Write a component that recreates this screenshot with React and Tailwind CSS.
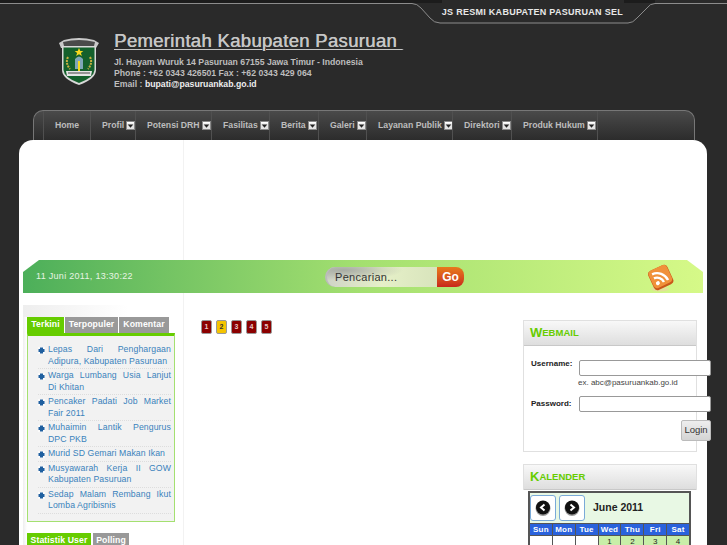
const navItems = [
  { label: "Home", width: "w-[47px]", arrow: false },
  { label: "Profil", width: "w-[45px]" },
  { label: "Potensi DRH", width: "w-[76px]" },
  { label: "Fasilitas", width: "w-[58px]" },
  { label: "Berita", width: "w-[49px]" },
  { label: "Galeri", width: "w-[48px]" },
  { label: "Layanan Publik", width: "w-[86px]" },
  { label: "Direktori", width: "w-[59px]" },
  { label: "Produk Hukum", width: "w-[87px]" },
];

const news = [
  { title: "Lepas Dari Penghargaan Adipura, Kabupaten Pasuruan" },
  { title: "Warga Lumbang Usia Lanjut Di Khitan" },
  { title: "Pencaker Padati Job Market Fair 2011" },
  { title: "Muhaimin Lantik Pengurus DPC PKB" },
  { title: "Murid SD Gemari Makan Ikan" },
  { title: "Musyawarah Kerja II GOW Kabupaten Pasuruan" },
  { title: "Sedap Malam Rembang Ikut Lomba Agribisnis" },
];

const days = ["Sun", "Mon", "Tue", "Wed", "Thu", "Fri", "Sat"];
const firstWeek = ["", "", "", "1", "2", "3", "4"];

const NavArrow = () => (
  <svg width="9" height="9" viewBox="0 0 9 9" className="ml-[2px] shrink-0">
    <rect x="0.5" y="0.5" width="8" height="8" fill="#e4e4e4" stroke="#8a8a8a" />
    <rect x="1" y="1" width="7" height="1.500" fill="#fff" />
    <path d="M1.800 3.500h5.400L4.500 6.800z" fill="#222" />
  </svg>
);

const Crest = () => (
  <svg width="42" height="49" viewBox="0 0 42 49">
    <path d="M1 6 L6 3 Q21 -1 36 3 L41 6 L38 11 L37 11 L4 11 L3 11 Z" fill="#c9c9c9" />
    <path d="M5 5 Q21 1 37 5 L36 9 L6 9 Z" fill="#4a4a4a" />
    <path d="M4 9 H38 V33 Q38 42 21 48 Q4 42 4 33 Z" fill="#d8d8d8" />
    <path d="M5.500 10.500 H36.500 V33 Q36 40.500 21 46 Q6 40.500 5.500 33 Z" fill="#14602c" />
    <path d="M21 11l1.300 3h3l-2.400 2 1 3-2.900-1.800L18.100 19l1-3-2.400-2h3z" fill="#f4d820" />
    <path d="M17 22 Q21 17 25 22 V32 H17 Z" fill="#7fa6b8" />
    <path d="M10 20 Q7 26 12 32 M32 20 Q35 26 30 32" stroke="#c9b040" strokeWidth="2" fill="none" strokeDasharray="2 1" />
    <rect x="20" y="24" width="2" height="11" fill="#f4d820" />
    <path d="M8 34 L34 34 L33 39 L9 39 Z" fill="#e4e4e4" />
    <path d="M10 36h22" stroke="#444" strokeWidth="1" />
  </svg>
);

const RssIcon = () => (
  <svg width="27" height="28" viewBox="0 0 27 28">
    <ellipse cx="13" cy="25" rx="9" ry="2.500" fill="#e8d8a0" opacity="0.7" />
    <g transform="rotate(-25 13.500 13)">
      <rect x="3" y="3" width="21" height="21" rx="4" fill="#c9571a" />
      <rect x="3.500" y="3" width="20" height="19" rx="4" fill="#f0913a" />
      <circle cx="8.500" cy="17.500" r="2" fill="#fff" />
      <path d="M7 11.500a7.500 7.500 0 0 1 7.500 7.500M7 7a12 12 0 0 1 12 12" stroke="#fff" strokeWidth="2.400" fill="none" />
    </g>
  </svg>
);

const NavCircle = ({ dir }) => (
  <button className="flex h-[26px] w-[26px] items-center justify-center rounded-[3px] border border-[#7aaad8] bg-white">
    <svg width="16" height="16" viewBox="0 0 16 16">
      <circle cx="8" cy="8.500" r="7.500" fill="#999" />
      <circle cx="8" cy="7.500" r="7" fill="#111" />
      <path d={dir === "left" ? "M9.500 4.500 6 7.500l3.500 3" : "M6.500 4.500 10 7.500l-3.500 3"} stroke="#fff" strokeWidth="2" fill="none" />
    </svg>
  </button>
);

const PanelTitle = ({ first, rest }) => (
  <div className="flex h-[25px] items-center border-b border-[#c8c8c8] bg-gradient-to-b from-[#f8f8f8] to-[#dedede] pb-[1px] pl-[6px] font-bold leading-none text-[#66cc00]">
    <span className="text-[13px]">{first}</span>
    <span className="text-[9.500px]">{rest}</span>
  </div>
);

const App = () => {
  return (
    <div className="relative h-[545px] w-[727px] overflow-hidden bg-[#2a2a2a] font-['Liberation_Sans',Arial,sans-serif]">
      {/* top strip with the notch for the tagline */}
      <svg width="727" height="30" viewBox="0 0 727 30" className="absolute left-0 top-0">
        <rect x="0" y="0" width="442" height="3" fill="#1c1c1c" />
        <rect x="624" y="0" width="31" height="3" fill="#1c1c1c" />
        <path d="M0 3.500 H412 Q417 3.500 421 8 L430 18 Q434 23 440 23 H628 Q633 23 637 18 L647 8 Q650 3.500 655 3.500 H727" fill="none" stroke="#8c8c8c" strokeWidth="1" />
      </svg>

      <header className="relative h-[110px]">
        <div className="flex justify-end pr-[104px] pt-[7px]">
          <span className="text-[9px] font-bold leading-[11px] tracking-[0.28px] text-[#e8e8e8]">JS RESMI KABUPATEN PASURUAN SEL</span>
        </div>
        <div className="flex pl-[58px] pt-[12px]">
          <div className="mt-[7px] w-[56px] shrink-0">
            <Crest />
          </div>
          <div className="text-[#bdbdbd]">
            <h1 className="whitespace-pre text-[18.500px] font-normal leading-[22px] tracking-[0.32px] text-[#c6c6c6] underline decoration-1 underline-offset-2 [text-shadow:0.5px_0_0_#c6c6c6]">Pemerintah Kabupaten Pasuruan </h1>
            <div className="mt-[5px] text-[8.700px] font-bold leading-[11px]">
              <p>Jl. Hayam Wuruk 14 Pasuruan 67155 Jawa Timur - Indonesia</p>
              <p>Phone : +62 0343 426501 Fax : +62 0343 429 064</p>
              <p>Email : <span className="text-[#eeeeee]">bupati@pasuruankab.go.id</span></p>
            </div>
          </div>
        </div>
      </header>

      <nav className="mx-[33px] flex h-[30px] w-[662px] rounded-t-[10px] border-x border-t border-[#777] bg-gradient-to-b from-[#4a4a4a] to-[#2c2c2c] pl-[9px]">
        {navItems.map((item) => (
          <a
            key={item.label}
            className={`flex h-full ${item.width} shrink-0 items-center justify-start border-l border-[#505050] pl-[11px] text-[8.700px] font-bold text-[#bdbdbd] last:border-r`}
          >
            <span className="whitespace-nowrap">{item.label}</span>
            {item.arrow !== false && <NavArrow />}
          </a>
        ))}
      </nav>

      <main className="mx-[19px] h-[405px] w-[688px] rounded-t-[14px] bg-white">
        <div className="ml-[164px] h-[120px] border-l border-[#f2f2f2]" />

        <div className="mx-[4px] flex h-[33px] w-[680px] items-center bg-gradient-to-r from-[#4caf5a] via-[#a4e070] to-[#d6f988] pl-[13px] [clip-path:polygon(16px_0,664px_0,100%_12px,100%_100%,0_100%,0_12px)]">
          <span className="w-[289px] shrink-0 text-[9px] tracking-[0.3px] text-[#e8f4e4]">11 Juni 2011, 13:30:22</span>
          <div className="flex h-[20px] w-[140px] shrink-0 items-stretch">
            <div className="flex w-[112px] items-end rounded-l-[10px] border-l-2 border-[#bbb] bg-[radial-gradient(ellipse_at_15%_15%,#a8aca4_0,transparent_45%),linear-gradient(to_right,#d0d4c8,#e6f0c8,#d8e4bc)] pb-[1px] pl-[8px] text-[11px] tracking-[0.3px] text-[#333]">Pencarian...</div>
            <div className="flex w-[27px] items-center justify-center rounded-r-[8px] bg-gradient-to-b from-[#e87a1c] to-[#c8241c] text-[12px] font-bold text-white">Go</div>
          </div>
          <div className="ml-auto mr-[29px] mt-[2px]">
            <RssIcon />
          </div>
        </div>

        <div className="flex">
          <aside className="w-[165px] shrink-0 border-r border-[#f2f2f2] bg-[linear-gradient(to_right,white_4px,#eeeeee_4px,white_8px)] pl-[8px]">
            <div className="-ml-[4px] h-[12px] w-[105px] bg-white" />
            <div className="-ml-[4px] h-[12px] w-[105px] bg-gradient-to-r from-[#eeeeee] to-white" />
            <div className="flex h-[16px] gap-[1px] text-[8.700px] font-bold tracking-[0.1px] text-white">
              <div className="flex w-[37px] items-center justify-center bg-[#66cc00]">Terkini</div>
              <div className="flex w-[53px] items-center justify-center bg-[#999]">Terpopuler</div>
              <div className="flex w-[50px] items-center justify-center bg-[#999]">Komentar</div>
            </div>
            <div className="h-[189px] w-[148px] border-x border-b border-[#a4e070] border-t-[3px] border-t-[#66cc00] bg-[#f2f2f2] pl-[10px] pr-[3px] pt-[7px]">
              <ul>
                {news.map((n) => (
                  <li key={n.title} className="flex items-start border-b border-dotted border-[#ddd] pb-[1px] pt-[1px]">
                    <svg width="7" height="7" viewBox="0 0 7 7" className="mr-[3px] mt-[3px] shrink-0">
                      <rect width="7" height="7" fill="#fafafa" />
                      <path d="M2 0.500h3v1.500h1.500v3H5v1.500H2V5H0.500V2H2z" fill="#1f5f9f" />
                    </svg>
                    <a className="block w-[123px] text-justify text-[8.700px] leading-[11.500px] tracking-[0.1px] text-[#3a82bc]">{n.title}</a>
                  </li>
                ))}
              </ul>
            </div>
            <div className="mt-[11px] flex h-[16px] gap-[2px] text-[8.700px] font-bold tracking-[0.1px] text-white">
              <div className="flex w-[64px] items-center justify-center bg-[#66cc00]">Statistik User</div>
              <div className="flex w-[36px] items-center justify-center bg-[#999]">Polling</div>
            </div>
          </aside>

          <section className="w-[339px] shrink-0 pl-[17px] pt-[27px]">
            <div className="flex gap-[4px]">
              {[1, 2, 3, 4, 5].map((n) => (
                <span
                  key={n}
                  className={`flex h-[14px] w-[11px] items-center justify-center rounded-[2px] border border-[#999] text-[7px] font-bold ${n === 2 ? "bg-[#f5c400] text-[#333]" : "bg-[#8b0000] text-[#e8c8c8]"}`}
                >
                  {n}
                </span>
              ))}
            </div>
          </section>

          <aside className="w-[174px] shrink-0 pt-[27px]">
            <div className="h-[132px] w-[174px] border border-[#e0e0e0]">
              <PanelTitle first="W" rest="EBMAIL" />
              <div className="relative h-[104px]">
                <div className="absolute left-[7px] top-[12px] text-[8px] font-bold text-[#222]">Username:</div>
                <input className="absolute left-[55px] top-[14px] h-[16px] w-[132px] rounded-[2px] border border-[#999] bg-white" />
                <div className="absolute left-[54px] top-[31px] text-[8px] text-[#444]">ex. abc@pasuruankab.go.id</div>
                <div className="absolute left-[7px] top-[52px] text-[8px] font-bold text-[#222]">Password:</div>
                <input className="absolute left-[55px] top-[50px] h-[16px] w-[132px] rounded-[2px] border border-[#999] bg-white" />
                <button className="absolute left-[157px] top-[74px] h-[21px] w-[30px] rounded-[2px] border border-[#bbb] bg-gradient-to-b from-[#eeeeee] to-[#d4d4d4] text-[9.500px] text-[#333]">Login</button>
              </div>
            </div>

            <div className="mt-[12px] border border-b-0 border-[#e0e0e0]">
              <PanelTitle first="K" rest="ALENDER" />
            </div>
            <div className="mx-[5px] mt-[1px] w-[163px] border-2 border-[#555] bg-[#e8f8e4]">
              <div className="flex h-[30px] items-center gap-[3px]">
                <NavCircle dir="left" />
                <NavCircle dir="right" />
                <span className="ml-[5px] text-[10.500px] font-bold text-[#222]">June 2011</span>
              </div>
              <div className="grid grid-cols-7 gap-[1px] bg-[#555] pt-[1px] text-center text-[8px] font-bold">
                {days.map((d) => (
                  <div key={d} className="h-[11px] bg-[#2a62dc] leading-[11px] tracking-[0.2px] text-white">{d}</div>
                ))}
                {firstWeek.map((d, i) => (
                  <div key={i} className={`h-[12px] font-normal leading-[12px] text-[#222] ${d ? "bg-[#c8eea8]" : "bg-white"}`}>{d}</div>
                ))}
              </div>
            </div>
          </aside>
        </div>
      </main>
    </div>
  );
};

export default App;
